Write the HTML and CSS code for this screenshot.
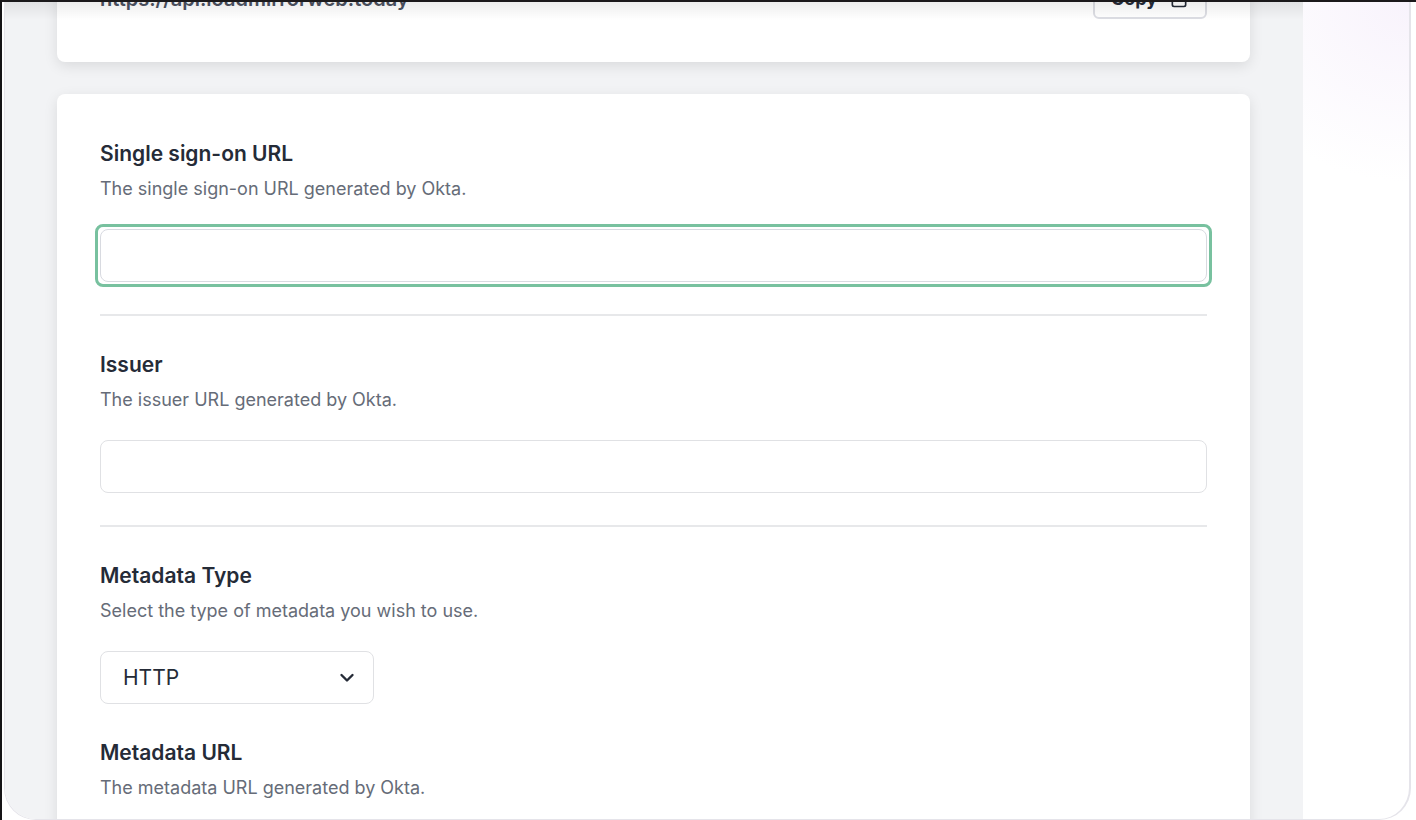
FILE: index.html
```
<!DOCTYPE html>
<html lang="en">
<head>
<meta charset="utf-8">
<title>Single sign-on settings</title>
<link rel="stylesheet" href="styles.css">
</head>
<body>
<div class="window">
  <div class="frame">
    <main class="content">
      <section class="card card-endpoint">
        <span class="endpoint">https://api.loadmirrorweb.today</span>
        <button class="copy" type="button">Copy
          <svg width="20" height="20" viewBox="0 0 24 24" fill="none" stroke="currentColor" stroke-width="2" stroke-linejoin="round" aria-hidden="true"><path d="M16 4h2a2 2 0 0 1 2 2v13a2 2 0 0 1-2 2H6a2 2 0 0 1-2-2V6a2 2 0 0 1 2-2h2"/><rect x="8" y="2" width="8" height="4" rx="1"/></svg>
        </button>
      </section>
      <form class="card card-form">
        <div class="field divided">
          <label class="label" for="sso">Single sign-on URL</label>
          <p class="hint">The single sign-on URL generated by Okta.</p>
          <div class="focus-ring"><input class="control focused" id="sso" type="text"></div>
        </div>
        <div class="field divided">
          <label class="label" for="issuer">Issuer</label>
          <p class="hint">The issuer URL generated by Okta.</p>
          <input class="control" id="issuer" type="text">
        </div>
        <div class="field">
          <label class="label" for="type">Metadata Type</label>
          <p class="hint">Select the type of metadata you wish to use.</p>
          <div class="select-wrap">
            <select class="control select" id="type"><option>HTTP</option><option>XML</option></select>
            <svg class="chevron" width="16" height="12" viewBox="0 0 16 12" fill="none" stroke="currentColor" stroke-width="2.4" stroke-linecap="round" stroke-linejoin="round" aria-hidden="true"><path d="M2.500 3L8 8.500 13.500 3"/></svg>
          </div>
        </div>
        <div class="field">
          <label class="label" for="url">Metadata URL</label>
          <p class="hint">The metadata URL generated by Okta.</p>
          <input class="control" id="url" type="text">
        </div>
      </form>
    </main>
  </div>
</div>
</body>
</html>
```
FILE: styles.css
```
* { box-sizing: border-box; }
body {
  margin: 0;
  font-family: Inter, "Liberation Sans", sans-serif;
  color: #252b37;
  background: #fff;
}
.window {
  display: flex;
  height: 100vh;
  padding-left: 2px;
  padding-right: 5px;
  border-top: 2px solid #1b191b;
  border-left: 2px solid #151416;
  overflow: hidden;
}
.frame {
  position: relative;
  flex: 1;
  display: flex;
  padding-right: 106px;
  border: 1px solid #e5e4ea;
  border-top: 0;
  border-right-width: 2px;
  border-radius: 0 0 32px 32px;
  background: radial-gradient(ellipse 200px 180px at 100% 0, #f8f3fc, #fff);
  overflow: hidden;
}
.frame::after {
  content: "";
  position: absolute;
  inset: 0 106px auto 0;
  height: 18px;
  background: linear-gradient(rgba(0, 0, 0, 0.07), rgba(0, 0, 0, 0));
  pointer-events: none;
}
.content {
  flex: 1;
  display: flex;
  flex-direction: column;
  gap: 32px;
  padding: 0 53px 0 52px;
  background: #f2f3f5;
}
.card {
  flex: none;
  background: #fff;
  border-radius: 8px;
  box-shadow: 0 4px 14px rgba(0, 0, 0, 0.1);
}
.card-endpoint {
  display: flex;
  justify-content: space-between;
  align-items: center;
  margin-top: -67px;
  padding: 43px;
}
.endpoint {
  font-size: 20px;
  line-height: 28px;
  font-weight: 600;
  color: #4b5160;
}
.copy {
  display: flex;
  align-items: center;
  justify-content: center;
  gap: 12px;
  width: 114px;
  height: 41px;
  border: 2px solid #dcdde3;
  border-radius: 6px;
  background: #fff;
  font: 700 18px/28px Inter, "Liberation Sans", sans-serif;
  color: #252b37;
}
.card-form {
  display: flex;
  flex-direction: column;
  gap: 33px;
  padding: 44px 43px;
}
.field { display: flex; flex-direction: column; }
.divided {
  padding-bottom: 32px;
  border-bottom: 2px solid #e7e8ea;
}
.label {
  font-size: 21px;
  line-height: 32px;
  font-weight: 600;
}
.hint {
  margin: 3px 0 24px;
  font-size: 18px;
  line-height: 32px;
  color: #666c78;
}
.control {
  display: block;
  width: 100%;
  height: 53px;
  padding: 0 22px;
  border: 1px solid #e0e1e4;
  border-radius: 8px;
  background: #fff;
  font: 400 21px/28px Inter, "Liberation Sans", sans-serif;
  color: #252b37;
}
.focus-ring {
  margin: -5px;
  padding: 2px;
  border: 3px solid #78c19f;
  border-radius: 8px;
}
.focused {
  border-color: #d8dae0;
}
.select-wrap { position: relative; width: 274px; }
.select { appearance: none; }
.chevron {
  position: absolute;
  right: 19px;
  top: 21px;
  pointer-events: none;
}
```
